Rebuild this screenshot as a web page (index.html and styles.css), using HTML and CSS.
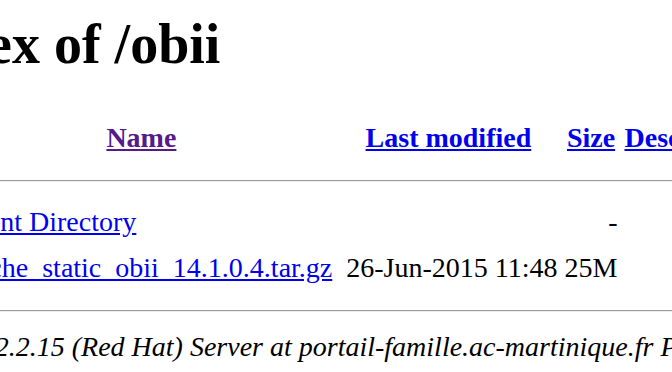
FILE: index.html
```html
<!DOCTYPE html>
<html>

<head>
  <title>Index of /obii</title>
  <link rel="stylesheet" href="styles.css">
</head>

<body>
  <div class="listing">
    <h1>Index of /obii</h1>
    <table>
      <tr>
        <th><span class="blank"></span></th>
        <th><a class="visited" href="?C=N;O=D">Name</a></th>
        <th><a href="?C=M;O=A">Last modified</a></th>
        <th><a href="?C=S;O=A">Size</a></th>
        <th><a href="?C=D;O=A">Description</a></th>
      </tr>
      <tr class="rule"><th colspan="5"><hr></th></tr>
      <tr>
        <td><span class="blank"></span></td>
        <td><a href="/">Parent Directory</a></td>
        <td class="date">&nbsp;</td>
        <td class="size">-</td>
        <td>&nbsp;</td>
      </tr>
      <tr>
        <td><span class="blank"></span></td>
        <td><a href="apache_static_obii_14.1.0.4.tar.gz">apache_static_obii_14.1.0.4.tar.gz</a></td>
        <td class="date">26-Jun-2015 11:48</td>
        <td class="size">25M</td>
        <td>&nbsp;</td>
      </tr>
      <tr class="rule"><th colspan="5"><hr></th></tr>
    </table>
    <address>Apache/2.2.15 (Red Hat) Server at portail-famille.ac-martinique.fr Port 80</address>
  </div>
</body>

</html>
```

FILE: styles.css
```css
body {
  margin: 0;
  background: #ffffff;
  color: #000000;
  font-family: "Liberation Serif", "Times New Roman", serif;
  font-size: 28px;
  overflow: hidden;
}

/* page is seen zoomed and scrolled a little to the right */
.listing {
  margin-left: -97px;
  padding-top: 12px;
}

h1 {
  font-size: 56px;
  line-height: 64px;
  margin: 0 0 39px;
}

a {
  color: #0000ee;
}

a.visited {
  color: #551a8b;
}

table {
  width: max-content;
  border-collapse: separate;
  border-spacing: 0;
  font-size: 28px;
}

th, td {
  padding: 0 3.5px;
  line-height: 46px;
  white-space: nowrap;
}

th {
  font-weight: bold;
  text-align: center;
}

/* stands in for the icon image column */
.blank {
  display: inline-block;
  width: 37px;
}

.date {
  padding-left: 10.5px;
  text-align: right;
}

.size {
  text-align: right;
}

tr.rule th {
  padding: 0;
  line-height: 0;
}

hr {
  height: 0;
  margin: 19px 0 17px;
  border: 0;
  border-top: 1px solid #9a9a9a;
  border-bottom: 1px solid #eeeeee;
}

address {
  margin: 2px 0 0;
  line-height: 32px;
  font-style: italic;
  white-space: nowrap;
}
```
